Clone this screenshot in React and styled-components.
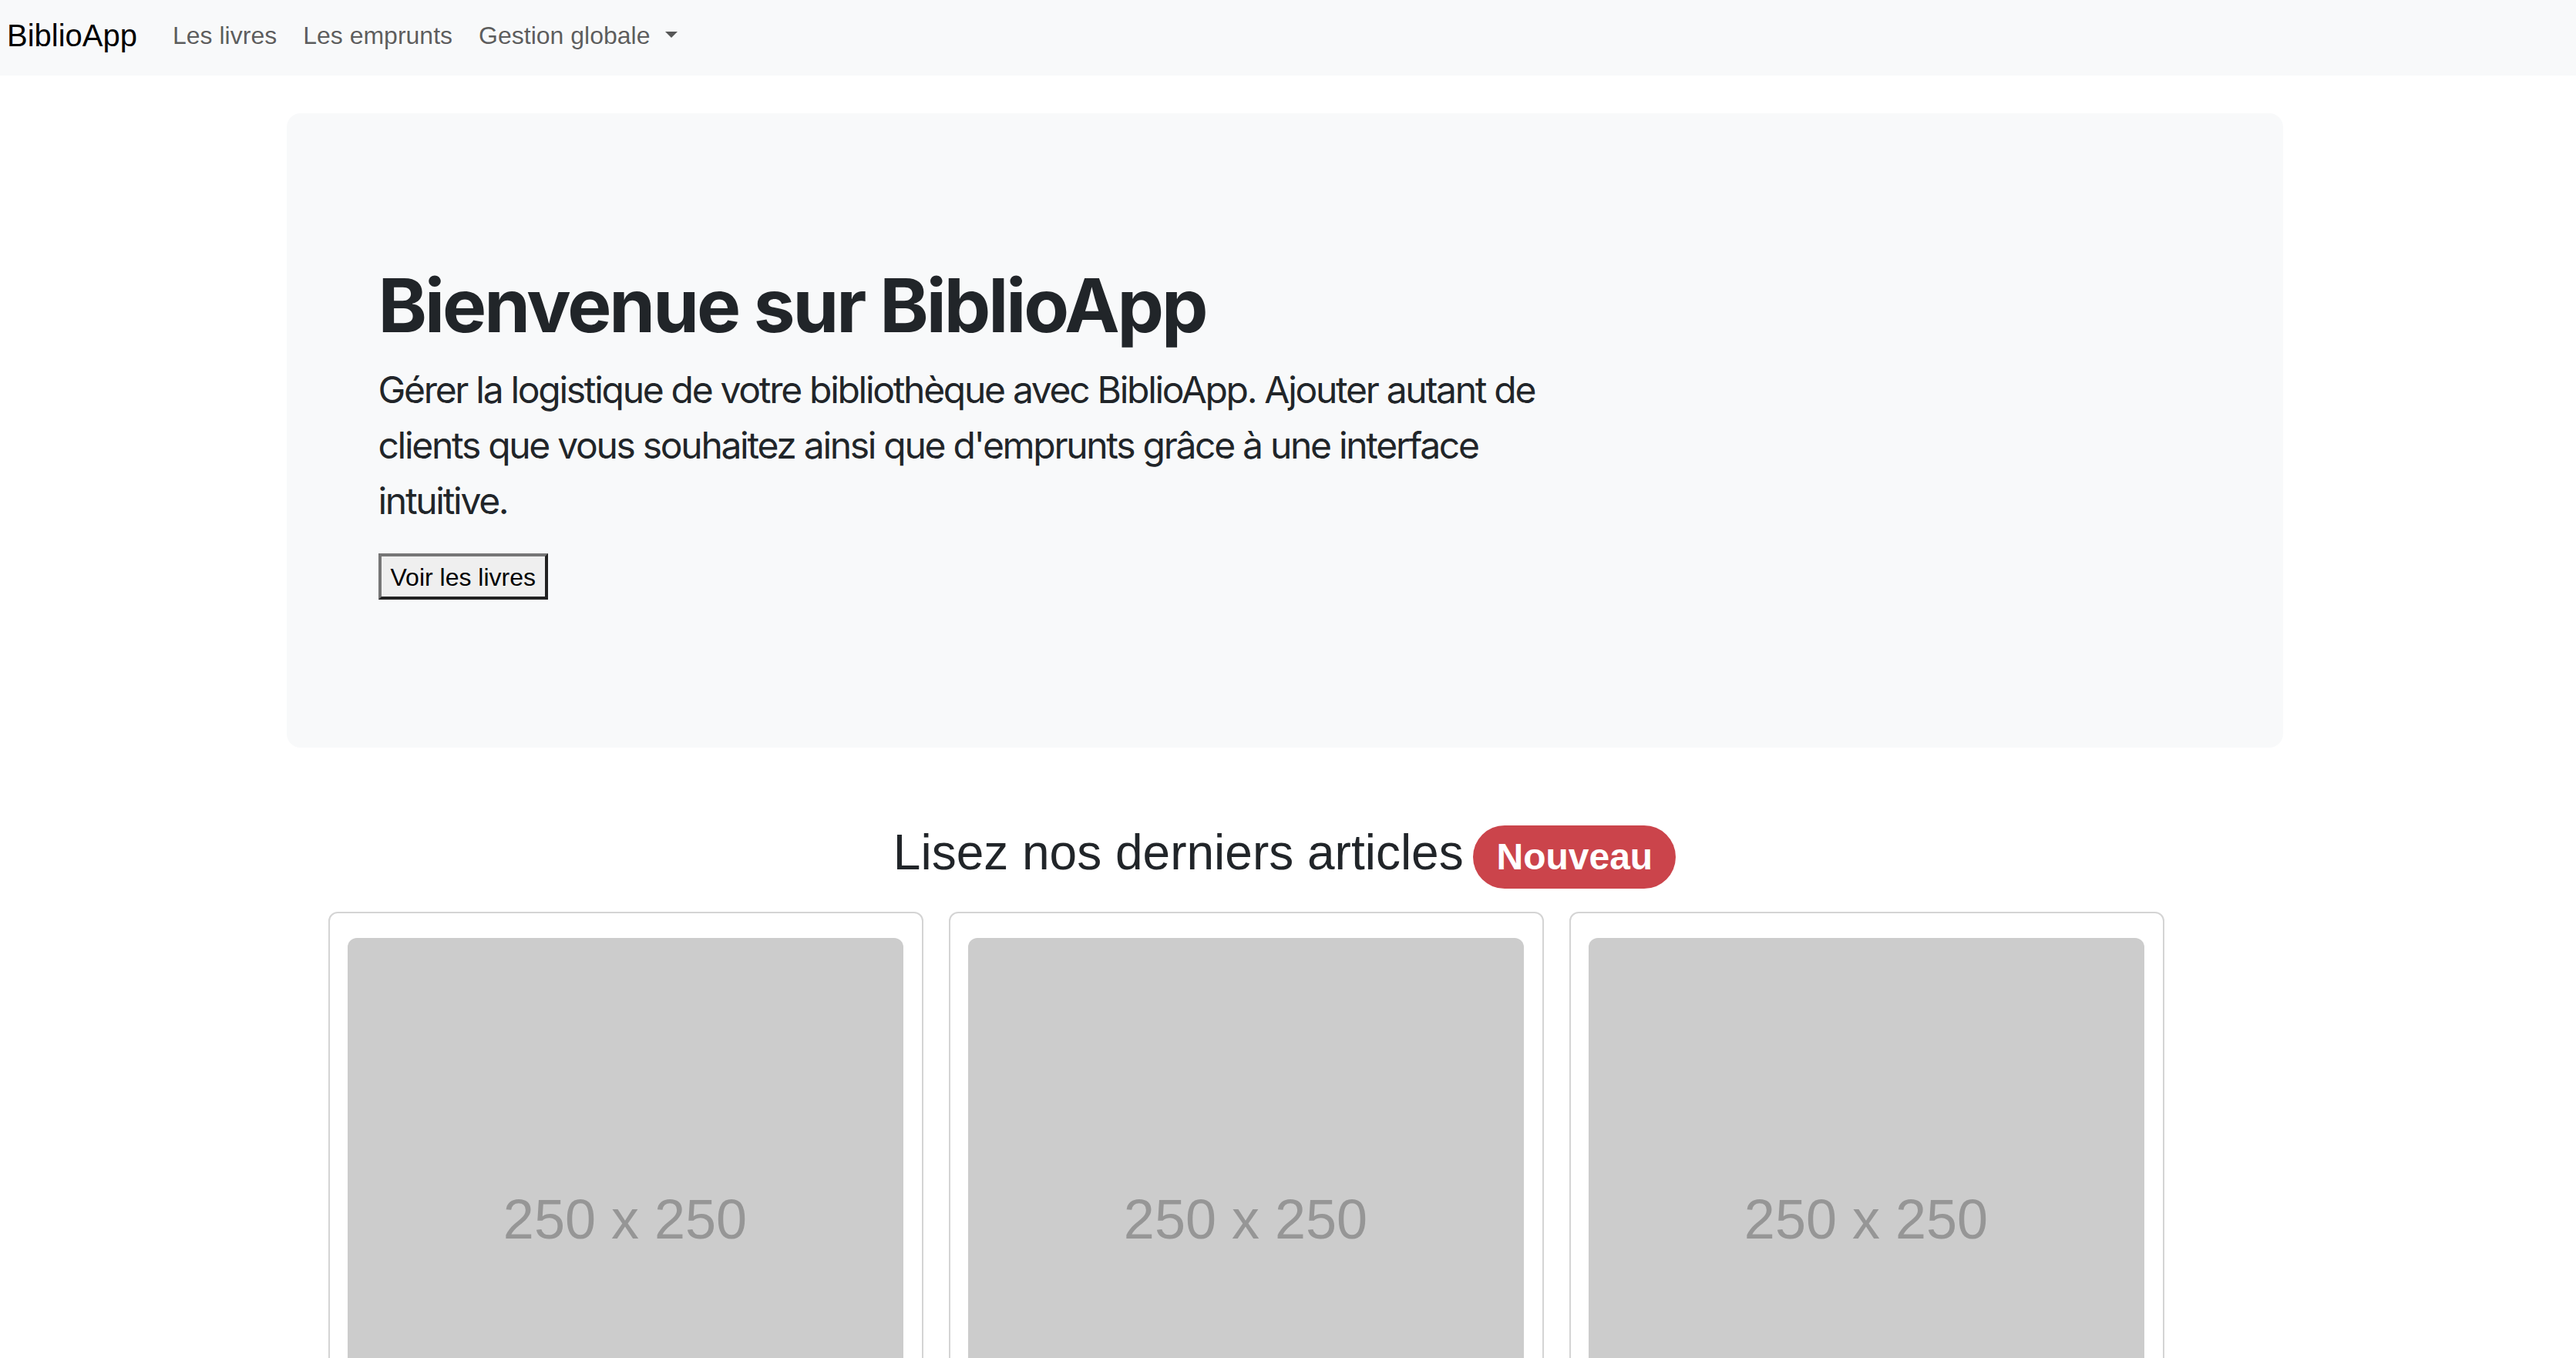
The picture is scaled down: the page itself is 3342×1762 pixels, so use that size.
import styled, { createGlobalStyle } from "styled-components"

const GlobalStyle = createGlobalStyle`
  html, body {
    margin: 0;
    padding: 0;
    background: #ffffff;
    color: #212529;
    font-family: "Liberation Sans", Arial, sans-serif;
  }
  * {
    box-sizing: border-box;
  }
`

const articles = [1, 2, 3]

export default function App() {
  return (
    <>
      <GlobalStyle />
      <Navbar>
        <Brand href="#">BiblioApp</Brand>
        <NavLink href="#">Les livres</NavLink>
        <NavLink href="#">Les emprunts</NavLink>
        <NavLink href="#" $dropdown>Gestion globale</NavLink>
      </Navbar>

      <Page>
        <Container>
          <Hero>
            <HeroTitle>Bienvenue sur BiblioApp</HeroTitle>
            <HeroText>
              Gérer la logistique de votre bibliothèque avec BiblioApp. Ajouter autant de clients que vous souhaitez ainsi que d'emprunts grâce à une interface intuitive.
            </HeroText>
            <PlainButton type="button">Voir les livres</PlainButton>
          </Hero>

          <SectionTitle>
            Lisez nos derniers articles <Badge>Nouveau</Badge>
          </SectionTitle>

          <Cards>
            {articles.map((a) => (
              <Card key={a}>
                <Placeholder>250 x 250</Placeholder>
              </Card>
            ))}
          </Cards>
        </Container>
      </Page>
    </>
  )
}

const Navbar = styled.nav`
  height: 98px;
  background-color: #f8f9fa;
  display: flex;
  align-items: center;
  padding: 0 9px 6px;
`

const Brand = styled.a`
  font-size: 40px;
  color: #000000;
  text-decoration: none;
  margin-right: 30px;
  line-height: 1.5;
`

const NavLink = styled.a`
  font-size: 32px;
  color: rgba(0, 0, 0, 0.65);
  text-decoration: none;
  padding: 16px 16px;
  margin-right: 2px;
  line-height: 1.5;

  ${(p) =>
    p.$dropdown &&
    `
    &::after {
      content: "";
      display: inline-block;
      margin-left: 20px;
      vertical-align: 8px;
      border-top: 8px solid rgba(0, 0, 0, 0.65);
      border-left: 8.5px solid transparent;
      border-right: 8.5px solid transparent;
    }
  `}
`

const Page = styled.div`
  padding-right: 9px;
`

const Container = styled.main`
  width: 2590px;
  margin: 0 auto;
  padding-bottom: 96px;
`

const Hero = styled.section`
  margin-top: 49px;
  background-color: #f8f9fa;
  border-radius: 18px;
  padding: 192px 119px;
`

const HeroTitle = styled.h1`
  font-family: Inter, "Liberation Sans", sans-serif;
  font-size: 96px;
  font-weight: 700;
  letter-spacing: -3px;
  line-height: 1.2;
  margin: 0 0 16px;
  color: #212529;
`

const HeroText = styled.p`
  font-family: Inter, "Liberation Sans", sans-serif;
  font-size: 48px;
  letter-spacing: -2.3px;
  line-height: 1.5;
  width: 1566px;
  margin: 0 0 32px;
  color: #212529;
`

const PlainButton = styled.button`
  font-family: "Liberation Sans", Arial, sans-serif;
  font-size: 32px;
  line-height: 1.5;
  padding: 2px 12px 0;
  height: 60px;
  background-color: #efefef;
  color: #000000;
  border: 4px solid;
  border-color: #767676 #222222 #222222 #767676;
  border-radius: 0;
`

const SectionTitle = styled.h2`
  font-size: 64px;
  font-weight: 400;
  line-height: 1.2;
  text-align: center;
  margin: 98px 0 30px;
  color: #212529;
`

const Badge = styled.span`
  display: inline-block;
  font-size: 48px;
  font-weight: 700;
  line-height: 1;
  color: #ffffff;
  background-color: #cb444b;
  padding: 17px 30px;
  margin-left: -5px;
  border-radius: 999px;
  vertical-align: baseline;
`

const Cards = styled.div`
  display: flex;
  gap: 33px;
  padding-left: 54px;
`

const Card = styled.div`
  width: 772px;
  border: 2px solid #d4d4d4;
  border-radius: 12px;
  padding: 32px 24px 24px 23px;
  background: #ffffff;
`

const Placeholder = styled.div`
  width: 721px;
  height: 721px;
  padding-top: 8px;
  background-color: #cccccc;
  color: #969696;
  border-radius: 12px 12px 0 0;
  display: flex;
  align-items: center;
  justify-content: center;
  font-family: "Liberation Sans", Arial, sans-serif;
  font-size: 72px;
`
